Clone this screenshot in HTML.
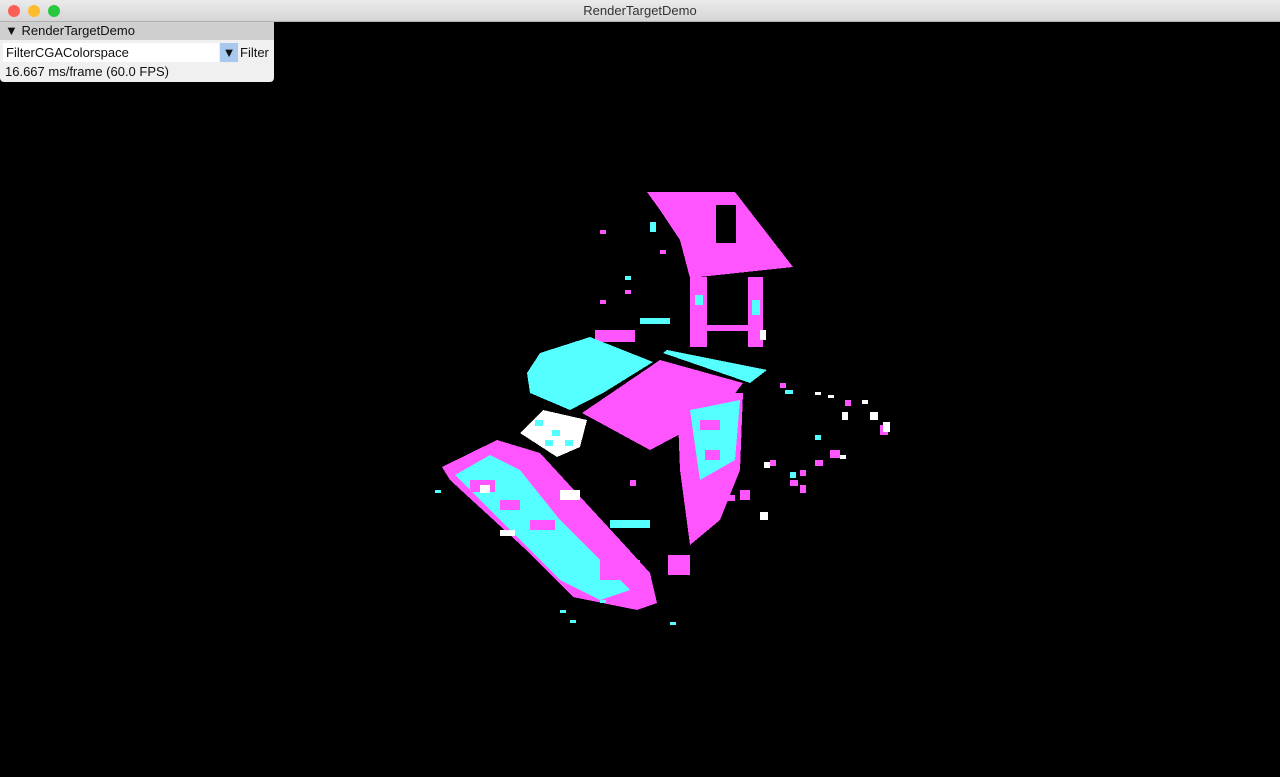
<!DOCTYPE html>
<html><head><meta charset="utf-8"><style>
html,body{margin:0;padding:0;width:1280px;height:777px;overflow:hidden;background:#000;font-family:"Liberation Sans",sans-serif}
#tb{position:absolute;left:0;top:0;width:1280px;height:22px;background:linear-gradient(#ebebeb,#d6d6d6);border-bottom:1px solid #b0b0b0;box-sizing:border-box;text-align:center;font-size:13px;line-height:22px;color:#333}
.dot{position:absolute;top:5px;width:12px;height:12px;border-radius:50%}
#panel{position:absolute;left:0;top:22px;width:274px;height:60px;background:#f0f0f0;border-radius:0 0 4px 4px;font-size:13px;color:#111}
#hd{height:18px;background:#cfcfcf;line-height:18px;padding-left:5px}
#cb{position:absolute;left:3px;top:21px;width:216px;height:19px;background:#fff;line-height:19px;padding-left:3px;box-sizing:border-box}
#ar{position:absolute;left:220px;top:21px;width:18px;height:19px;background:#a9c8ee;text-align:center;line-height:19px;font-size:13px}
#fl{position:absolute;left:240px;top:21px;line-height:19px}
#fps{position:absolute;left:5px;top:41px;line-height:17px}
svg{position:absolute;left:0;top:0}
</style></head><body>
<svg width="1280" height="777" shape-rendering="crispEdges">
<g fill="#ff55ff">
<polygon points="647,192 735,192 793,267 690,278 680,240 660,210"/>
<polygon points="582,413 660,360 743,383 720,413 650,450"/>
<polygon points="442,467 497,440 540,453 620,540 650,573 657,603 637,610 573,597 523,547 450,480"/>
<rect x="690" y="277" width="17" height="70"/><rect x="748" y="277" width="15" height="70"/>
<rect x="690" y="325" width="73" height="6"/>
<polygon points="677,393 743,393 740,470 720,520 690,545 680,470"/>
<rect x="595" y="330" width="40" height="12"/>
<rect x="668" y="555" width="22" height="20"/>
</g>
<g fill="#000"><rect x="716" y="205" width="20" height="38"/><rect x="707" y="285" width="41" height="40"/></g>
<g fill="#55ffff">
<polygon points="527,373 540,353 590,337 653,362 603,393 570,410 530,393"/>
<polygon points="667,350 767,370 750,383 663,353"/>
<polygon points="455,475 490,455 520,470 560,520 600,560 630,590 600,600 560,580 520,540 480,500"/>
<polygon points="690,410 740,400 735,460 700,480"/>
<rect x="640" y="318" width="30" height="6"/><rect x="610" y="520" width="40" height="8"/>
<rect x="695" y="295" width="8" height="10"/><rect x="752" y="300" width="8" height="15"/>
</g>
<g fill="#ff55ff"><rect x="470" y="480" width="25" height="12"/><rect x="500" y="500" width="20" height="10"/><rect x="530" y="520" width="25" height="10"/><rect x="600" y="560" width="40" height="20"/><rect x="700" y="420" width="20" height="10"/><rect x="705" y="450" width="15" height="10"/></g>
<polygon fill="#ffffff" points="520,433 543,410 587,420 580,447 557,457"/>
<g fill="#55ffff"><rect x="535" y="420" width="8" height="6"/><rect x="552" y="430" width="8" height="6"/><rect x="565" y="440" width="8" height="6"/><rect x="545" y="440" width="8" height="6"/></g>
<g fill="#fff"><rect x="480" y="485" width="10" height="8"/><rect x="560" y="490" width="20" height="10"/><rect x="500" y="530" width="15" height="6"/></g>
<g fill="#ff55ff"><rect x="780" y="383" width="6" height="5"/><rect x="845" y="400" width="6" height="6"/><rect x="880" y="425" width="8" height="10"/><rect x="800" y="470" width="6" height="6"/><rect x="815" y="460" width="8" height="6"/><rect x="830" y="450" width="10" height="8"/><rect x="790" y="480" width="8" height="6"/><rect x="800" y="485" width="6" height="8"/><rect x="740" y="490" width="10" height="10"/><rect x="600" y="230" width="6" height="4"/><rect x="660" y="250" width="6" height="4"/><rect x="600" y="300" width="6" height="4"/><rect x="625" y="290" width="6" height="4"/><rect x="770" y="460" width="6" height="6"/><rect x="725" y="495" width="10" height="6"/><rect x="630" y="480" width="6" height="6"/></g>
<g fill="#fff"><rect x="870" y="412" width="8" height="8"/><rect x="862" y="400" width="6" height="4"/><rect x="815" y="392" width="6" height="3"/><rect x="828" y="395" width="6" height="3"/><rect x="842" y="412" width="6" height="8"/><rect x="883" y="422" width="7" height="10"/><rect x="764" y="462" width="6" height="6"/><rect x="840" y="455" width="6" height="4"/><rect x="760" y="330" width="6" height="10"/><rect x="760" y="512" width="8" height="8"/></g>
<g fill="#55ffff"><rect x="815" y="435" width="6" height="5"/><rect x="785" y="390" width="8" height="4"/><rect x="790" y="472" width="6" height="6"/><rect x="625" y="276" width="6" height="4"/><rect x="435" y="490" width="6" height="3"/><rect x="560" y="610" width="6" height="3"/><rect x="570" y="620" width="6" height="3"/><rect x="670" y="622" width="6" height="3"/><rect x="650" y="222" width="6" height="10"/><rect x="600" y="600" width="6" height="3"/></g>
</svg>
<div id="tb">RenderTargetDemo
<div class="dot" style="left:8px;background:#fc5f57"></div><div class="dot" style="left:28px;background:#fdbc2e"></div><div class="dot" style="left:48px;background:#28c840"></div></div>
<div id="panel"><div id="hd">▼ RenderTargetDemo</div>
<div id="cb">FilterCGAColorspace</div><div id="ar">▼</div><div id="fl">Filter</div>
<div id="fps">16.667 ms/frame (60.0 FPS)</div></div>
</body></html>
